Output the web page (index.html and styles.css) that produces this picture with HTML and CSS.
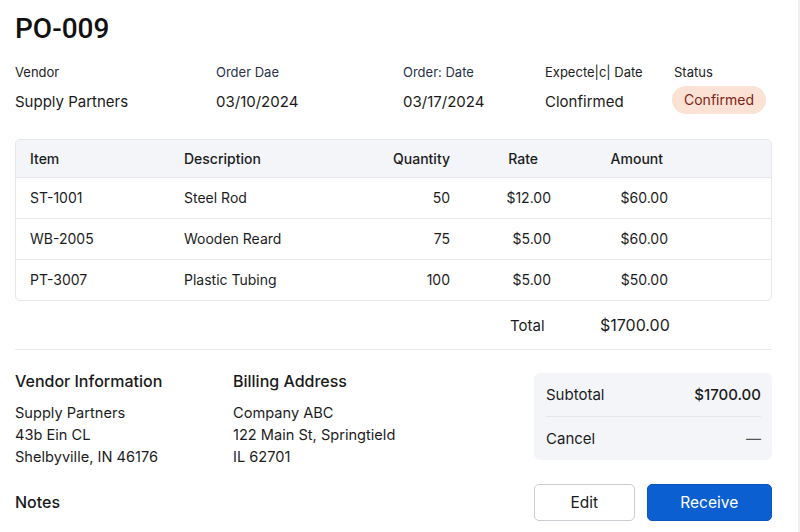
FILE: index.html
```html
<!DOCTYPE html>
<html>
<head>
<meta charset="utf-8">
<link rel="stylesheet" href="styles.css">
</head>
<body>
<div class="page">
  <h1 class="title">PO-009</h1>
  <div class="meta">
    <div class="meta-col">
      <div class="label">Vendor</div>
      <div class="value">Supply Partners</div>
    </div>
    <div class="meta-col">
      <div class="label blue">Order Dae</div>
      <div class="value">03/10/2024</div>
    </div>
    <div class="meta-col">
      <div class="label blue">Order: Date</div>
      <div class="value">03/17/2024</div>
    </div>
    <div class="meta-col">
      <div class="label">Expecte|c| Date</div>
      <div class="value">Clonfirmed</div>
    </div>
    <div class="meta-col">
      <div class="label">Status</div>
      <div class="badge">Confirmed</div>
    </div>
  </div>

  <div class="table-wrap">
    <table class="items">
      <colgroup>
        <col class="c1"><col class="c2"><col class="c3"><col class="c4"><col class="c5"><col class="c6">
      </colgroup>
      <thead>
        <tr>
          <th class="l">Item</th>
          <th class="l">Description</th>
          <th class="r">Quantity</th>
          <th class="r rate-h">Rate</th>
          <th class="r amt-h">Amount</th>
          <th></th>
        </tr>
      </thead>
      <tbody>
        <tr><td class="l">ST-1001</td><td class="l">Steel Rod</td><td class="r">50</td><td class="r">$12.00</td><td class="r">$60.00</td><td></td></tr>
        <tr><td class="l">WB-2005</td><td class="l">Wooden Reard</td><td class="r">75</td><td class="r">$5.00</td><td class="r">$60.00</td><td></td></tr>
        <tr><td class="l">PT-3007</td><td class="l">Plastic Tubing</td><td class="r">100</td><td class="r">$5.00</td><td class="r">$50.00</td><td></td></tr>
      </tbody>
    </table>
  </div>

  <div class="total-row">
    <span class="total-label">Total</span>
    <span class="total-value">$1700.00</span>
  </div>

  <div class="bottom">
    <div class="info">
      <div class="info-cols">
        <div class="info-col">
          <h2 class="sub">Vendor Information</h2>
          <p class="addr">Supply Partners<br>43b Ein CL<br>Shelbyville, IN 46176</p>
        </div>
        <div class="info-col">
          <h2 class="sub">Billing Address</h2>
          <p class="addr">Company ABC<br>122 Main St, Springtield<br>IL 62701</p>
        </div>
      </div>
      <h2 class="sub notes">Notes</h2>
      <p class="notes-text">Lorem ipsum dolor sit amet consectetur adipiscing elit sed do eiusmod</p>
    </div>
    <div class="side">
      <div class="summary">
        <div class="sum-row"><span>Subtotal</span><span class="sum-val">$1700.00</span></div>
        <div class="sum-row"><span>Cancel</span><span class="dash">—</span></div>
      </div>
      <div class="actions">
        <button class="btn btn-edit">Edit</button>
        <button class="btn btn-primary">Receive</button>
      </div>
    </div>
  </div>
</div>
</body>
</html>
```

FILE: styles.css
```css
* { box-sizing: border-box; }
html, body { margin: 0; padding: 0; }
body {
  width: 800px;
  height: 532px;
  overflow: hidden;
  background: #fff;
  font-family: Inter, "Noto Sans", "Liberation Sans", sans-serif;
  color: #1c1c1e;
  border-right: 2px solid #eef0f2;
}
.page {
  width: 757px;
  margin-left: 15px;
}
.title {
  margin: 0;
  padding-top: 14px;
  font-family: Roboto, Inter, sans-serif;
  font-size: 28px;
  font-weight: 500;
  line-height: 30px;
  color: #111;
}
.meta {
  display: grid;
  grid-template-columns: 201px 187px 142px 129px 1fr;
  margin-top: 20px;
}
.label {
  font-size: 13px;
  line-height: 16px;
  color: #222;
}
.label.blue { color: #27324a; }
.value {
  margin-top: 12px;
  font-size: 15px;
  line-height: 20px;
  color: #1a1a1a;
}
.badge {
  display: inline-block;
  margin-top: 6px;
  margin-left: -2px;
  padding: 0 12px;
  height: 28px;
  line-height: 28px;
  border-radius: 14px;
  background: #fbe2d4;
  color: #7e2414;
  font-size: 14px;
}
.table-wrap {
  margin-top: 25px;
  border: 1px solid #e4e7eb;
  border-radius: 5px;
  overflow: hidden;
}
.items {
  width: 100%;
  border-collapse: collapse;
  table-layout: fixed;
  font-size: 14px;
}
.c1 { width: 154px; }
.c2 { width: 171px; }
.c3 { width: 124px; }
.c4 { width: 101px; }
.c5 { width: 117px; }
.c6 { width: auto; }
.items thead th {
  background: #f3f5f8;
  height: 37px;
  font-weight: 500;
  color: #1c1c1e;
}
.items td {
  height: 41px;
  border-top: 1px solid #e6e8eb;
  color: #1c1c1e;
}
.items .l { text-align: left; padding-left: 14px; }
.items .r { text-align: right; padding-right: 15px; }
.items .rate-h { padding-right: 28px; }
.items .amt-h { padding-right: 20px; }
.total-row {
  display: flex;
  height: 49px;
  align-items: center;
  padding-left: 495px;
  font-size: 15px;
  border-bottom: 1px solid #e6e8eb;
}
.total-label { width: 90px; }
.total-value { font-size: 16px; }
.bottom {
  display: flex;
  justify-content: space-between;
  padding-top: 21px;
}
.info-cols {
  display: grid;
  grid-template-columns: 218px 1fr;
}
.sub {
  margin: 0;
  font-size: 16px;
  font-weight: 500;
  line-height: 20px;
  color: #1a1a1a;
}
.addr {
  margin: 11px 0 0;
  font-size: 14.6px;
  line-height: 22px;
  color: #1c1c1e;
}
.notes { margin-top: 24px; }
.notes-text {
  margin: 16px 0 0;
  font-size: 14px;
  line-height: 20px;
  color: #333;
}
.side {
  width: 238px;
  margin-top: 2px;
}
.summary {
  background: #f3f5f8;
  border-radius: 6px;
  padding: 0 11px 0 12px;
}
.sum-row {
  display: flex;
  justify-content: space-between;
  align-items: center;
  height: 43px;
  font-size: 15px;
}
.sum-row + .sum-row { border-top: 1px solid #e2e5e9; height: 44px; }
.sum-val { font-weight: 500; }
.dash { color: #555; }
.actions {
  display: flex;
  gap: 12px;
  margin-top: 24px;
}
.btn {
  font-family: inherit;
  font-size: 15.5px;
  height: 37px;
  border-radius: 5px;
  cursor: pointer;
}
.btn-edit {
  width: 101px;
  background: #fff;
  border: 1px solid #c9ccd1;
  color: #1a1a1a;
}
.btn-primary {
  width: 126px;
  background: #0b5fd1;
  border: 1px solid #0a56bd;
  color: #fff;
}
```
